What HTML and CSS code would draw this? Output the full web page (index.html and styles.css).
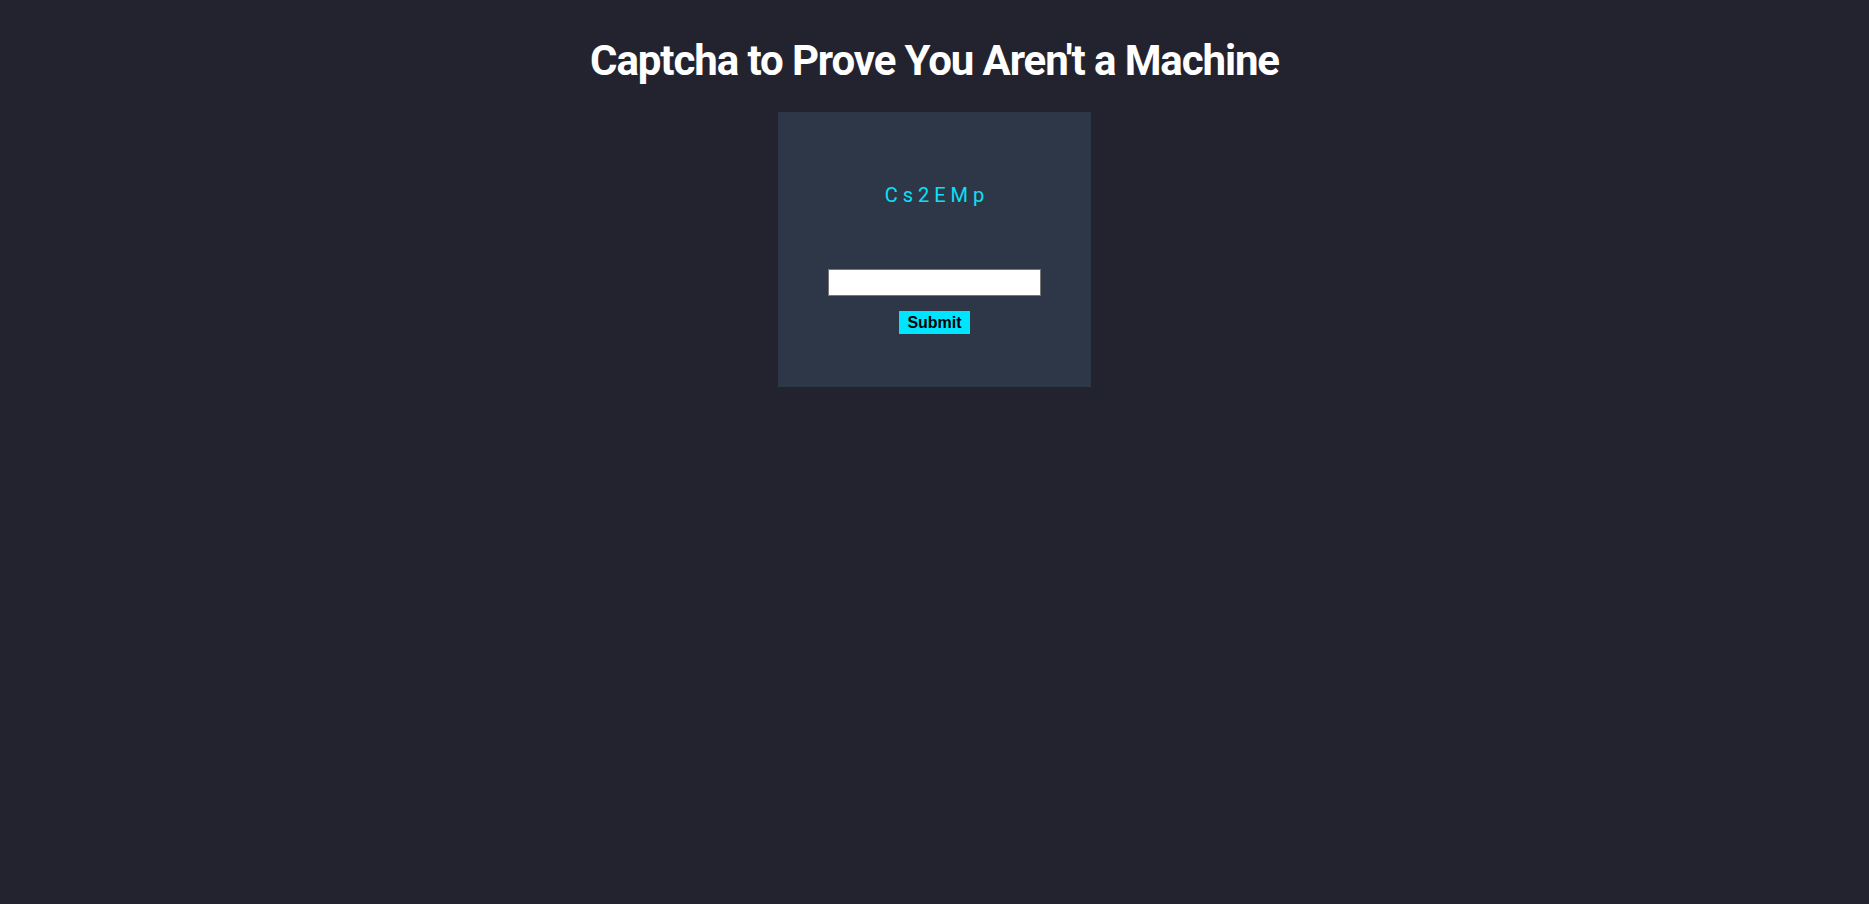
FILE: index.html
```html
<!DOCTYPE html>
<html lang="en">
<head>
<meta charset="utf-8">
<title>Captcha</title>
<link rel="stylesheet" href="styles.css">
</head>
<body>
<main class="page">
  <h1 class="title">Captcha to Prove You Aren't a Machine</h1>
  <section class="card">
    <div class="code">Cs2EMp</div>
    <input class="answer" type="text">
    <button class="submit" type="button">Submit</button>
  </section>
</main>
</body>
</html>
```
FILE: styles.css
```css
html, body {
  margin: 0;
  padding: 0;
  height: 100%;
  background: #232330;
}
.page {
  display: flex;
  flex-direction: column;
  align-items: center;
  font-family: Roboto, "Liberation Sans", sans-serif;
}
.title {
  margin: 36px 0 27px;
  font-size: 42px;
  font-weight: 700;
  letter-spacing: -1.1px;
  line-height: normal;
  color: #ffffff;
}
.card {
  width: 313px;
  height: 275px;
  box-sizing: border-box;
  background: #2e3748;
  display: flex;
  flex-direction: column;
  align-items: center;
  padding-top: 72px;
}
.code {
  font-size: 20px;
  line-height: 23px;
  letter-spacing: 5px;
  padding-left: 5px;
  color: #0ae0f8;
}
.answer {
  margin-top: 62px;
  width: 213px;
  height: 27px;
  box-sizing: border-box;
  border: 1px solid #767676;
  background: #ffffff;
  padding: 0 4px;
  outline: none;
}
.submit {
  margin-top: 15px;
  width: 71px;
  height: 23px;
  padding: 0;
  border: none;
  background: #00e5ff;
  color: #000000;
  font-family: "Liberation Sans", Arial, sans-serif;
  font-weight: 700;
  font-size: 16px;
}
```
